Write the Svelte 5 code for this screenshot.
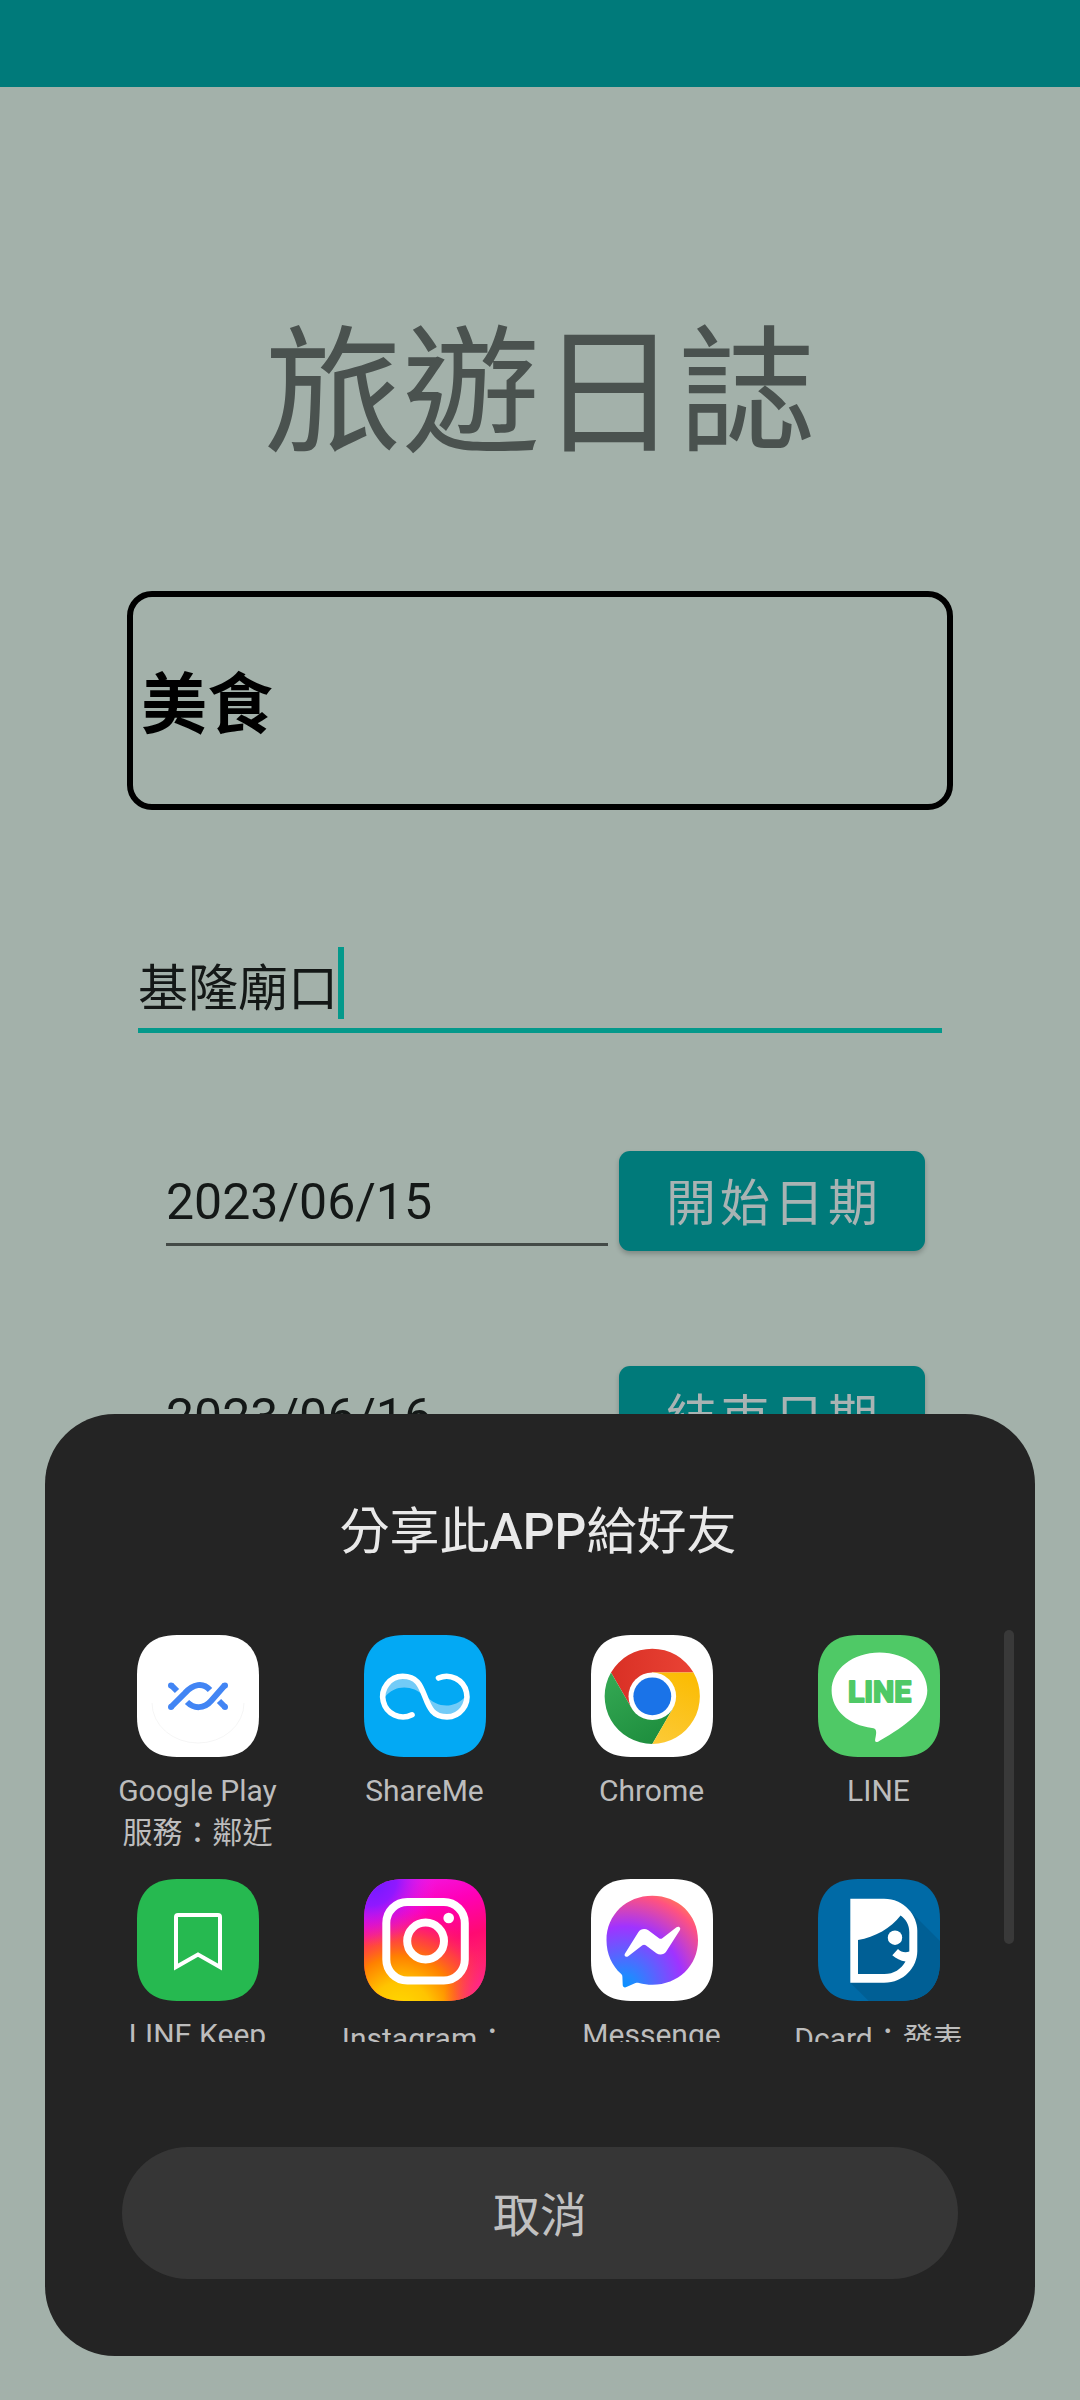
<script>
  let category = $state('美食');
  let place = $state('基隆廟口');
  let dates = $state([
    { id: 'start', value: '2023/06/15', label: '開始日期' },
    { id: 'end', value: '2023/06/16', label: '結束日期' }
  ]);
  const apps = [
    { icon: 'nearby', lines: ['Google Play', '服務：鄰近'] },
    { icon: 'shareme', lines: ['ShareMe'] },
    { icon: 'chrome', lines: ['Chrome'] },
    { icon: 'line', lines: ['LINE'] },
    { icon: 'keep', lines: ['LINE Keep'] },
    { icon: 'instagram', lines: ['Instagram：'], tall: true },
    { icon: 'messenger', lines: ['Messenge'] },
    { icon: 'dcard', lines: ['Dcard：發表'], tall: true }
  ];
  // Rounded launcher tile shared by every app icon
  const tile = 'M40 0H82C108 0 122 14 122 40V82C122 108 108 122 82 122H40C14 122 0 108 0 82V40C0 14 14 0 40 0Z';
</script>

<div class="screen" lang="zh-Hant">
  <header class="status"></header>

  <main>
    <h1>旅遊日誌</h1>
    <input class="category" aria-label="類別" bind:value={category} />
    <div class="place">
      <input aria-label="地點" bind:value={place} />
      <span class="caret"></span>
    </div>
    {#each dates as date (date.id)}
      <div class="date-row">
        <input aria-label={date.label} bind:value={date.value} />
        <button type="button">{date.label}</button>
      </div>
    {/each}
  </main>

  <section class="sheet" aria-labelledby="share-title">
    <h2 id="share-title">分享此<strong>APP</strong>給好友</h2>
    <div class="apps">
      {#each apps as app (app.icon)}
        <button type="button" class="app">
          <svg viewBox="0 0 122 122" aria-hidden="true">
            {#if app.icon === 'nearby'}
              <path d={tile} fill="#fff" />
              <path d="M15 68a46 40 0 0 0 92 0" fill="none" stroke="#eee" stroke-width="0.6" />
              <g fill="none" stroke="#4285f4" stroke-width="6">
                <path d="M34 72L48 58C56 49 66 47 73 55" />
                <path d="M50 67C57 74 67 74 74 66L88 50" />
                <path d="M34 50l6 6M82 66l6 6" />
              </g>
              <g fill="#4285f4">
                <circle cx="34" cy="50.400" r="3" /><circle cx="34" cy="72" r="3" />
                <circle cx="88" cy="50.400" r="3" /><circle cx="88" cy="72" r="3" />
              </g>
            {:else if app.icon === 'shareme'}
              <path d={tile} fill="#03a9f4" />
              <path d="M20 62C20 48 29 42 39 42C52 42 56 52 60 61C48 49 30 50 21 62Z" fill="#72cbf7" />
              <path d="M62 61C73 73 90 74 101 62C101 76 92 81 83 81C70 81 66 71 62 61Z" fill="#72cbf7" />
              <path d="M48 79.800A20.300 20.300 0 1 1 38.700 41.300C53 41.300 56.500 50 60.900 61.600S69 81.900 83 81.900A20.300 20.300 0 1 0 74.500 43" fill="none" stroke="#fff" stroke-width="5.600" stroke-linecap="round" />
            {:else if app.icon === 'chrome'}
              <defs>
                <linearGradient id="c-red"><stop stop-color="#d93025" /><stop offset="1" stop-color="#ea4335" /></linearGradient>
                <linearGradient id="c-green" x1="0.700" y1="1" x2="0.100" y2="0"><stop stop-color="#1e8e3e" /><stop offset="1" stop-color="#34a853" /></linearGradient>
                <linearGradient id="c-yellow" x1="0.300" y1="1" x2="0.600" y2="0"><stop stop-color="#fcc934" /><stop offset="1" stop-color="#fbbc04" /></linearGradient>
              </defs>
              <path d={tile} fill="#fff" />
              <path d="M20 37.500A47.700 47.700 0 0 1 102.500 37.500H61.300L40.700 73.300Z" fill="url(#c-red)" />
              <path d="M20 37.500A47.700 47.700 0 0 0 61.300 109L82 73.300H40.700Z" fill="url(#c-green)" />
              <path d="M102.500 37.500A47.700 47.700 0 0 1 61.300 109L82 73.300L61.300 37.500Z" fill="url(#c-yellow)" />
              <circle cx="61.300" cy="61.300" r="23.800" fill="#fff" />
              <circle cx="61.300" cy="61.300" r="18.900" fill="#1a73e8" />
            {:else if app.icon === 'line'}
              <path d={tile} fill="#4fc966" />
              <path d="M61.500 17.600C88 17.600 109.300 34 109.300 55.600C109.300 75 88 91 62 105.500C58 108.500 56.500 107 57.300 103.500C59 96 58.500 93.500 54 93C31 90.500 13.600 75 13.600 55.600C13.600 34 35 17.600 61.500 17.600Z" fill="#fff" />
              <text x="61.500" y="67" class="line-word">LINE</text>
            {:else if app.icon === 'keep'}
              <path d={tile} fill="#26b950" />
              <path d="M39 88V38q0-2 2-2H81q2 0 2 2V88L61 75.500Z" fill="none" stroke="#fff" stroke-width="4" />
            {:else if app.icon === 'instagram'}
              <defs>
                <linearGradient id="i-base" x1="0.200" y1="0" x2="0.500" y2="1"><stop stop-color="#f01bea" /><stop offset="0.300" stop-color="#ff00b8" /><stop offset="0.600" stop-color="#ff0a72" /><stop offset="1" stop-color="#ff3a60" /></linearGradient>
                <radialGradient id="i-warm" cx="0.300" cy="1.100" r="0.850"><stop stop-color="#ffdd00" /><stop offset="0.300" stop-color="#ffc400" /><stop offset="0.550" stop-color="#ff8000" /><stop offset="0.750" stop-color="#ff5030" stop-opacity="0.700" /><stop offset="1" stop-color="#ff1080" stop-opacity="0" /></radialGradient>
                <radialGradient id="i-violet" cx="0.050" cy="0" r="0.550"><stop stop-color="#6a1cff" /><stop offset="0.400" stop-color="#9018ff" /><stop offset="1" stop-color="#f01bea" stop-opacity="0" /></radialGradient>
                <radialGradient id="i-pink" cx="1.050" cy="1" r="0.400"><stop stop-color="#ff18c0" /><stop offset="1" stop-color="#ff1090" stop-opacity="0" /></radialGradient>
              </defs>
              <path d={tile} fill="url(#i-base)" />
              <path d={tile} fill="url(#i-warm)" />
              <path d={tile} fill="url(#i-violet)" />
              <path d={tile} fill="url(#i-pink)" />
              <rect x="22.300" y="23" width="78.500" height="78.500" rx="21" fill="none" stroke="#fff" stroke-width="8" />
              <circle cx="61.600" cy="62" r="18.400" fill="none" stroke="#fff" stroke-width="8" />
              <circle cx="84.700" cy="39" r="5.300" fill="#fff" />
            {:else if app.icon === 'messenger'}
              <defs>
                <radialGradient id="m-fill" cx="0.190" cy="0.990" r="1.090"><stop stop-color="#0a91ff" /><stop offset="0.120" stop-color="#2388ff" /><stop offset="0.600" stop-color="#a033ff" /><stop offset="0.920" stop-color="#ff5280" /><stop offset="1" stop-color="#ff7061" /></radialGradient>
              </defs>
              <path d={tile} fill="#fff" />
              <path d="M61.300 16.700C87 16.700 107 35.500 107 61.200S87 105.700 61.300 105.700C56.700 105.700 52.200 105.100 48 103.900C46.500 103.600 45.500 103.700 44.500 104.100L35.400 108.100C33.500 108.900 31.800 108 31.700 106L31.400 97.900C31.400 96.500 30.900 95.600 30 94.800C21 86.700 15.500 75 15.500 61.200C15.500 35.500 35.600 16.700 61.300 16.700Z" fill="url(#m-fill)" />
              <path d="M34 74.500L47.300 53.200C49.500 49.800 54 48.900 57.300 51.300L68 59.300C69 60 70.300 60 71.300 59.300L85.500 48.300C87.800 46.600 90.300 48.800 88.800 51.200L75.400 72.300C73.200 75.700 68.700 76.600 65.400 74.200L54.700 66.200C53.700 65.500 52.400 65.500 51.400 66.200L37.200 77.200C34.900 78.900 32.500 76.900 34 74.500Z" fill="#fff" />
            {:else}
              <clipPath id="d-clip"><path d={tile} /></clipPath>
              <path d={tile} fill="#006aa6" />
              <path d="M32.300 103.700L93 33L140 80V140H69Z" fill="#005f95" clip-path="url(#d-clip)" />
              <path d="M32.300 19.700H66C86 19.700 99.300 36 99.300 52V72C99.300 88 86 103.700 66 103.700H32.300Z" fill="#fff" />
              <path d="M40 61C57 58 73 49 82.600 36.400C88 40 91.300 46 91.300 53V72.600C87 74 83 73 80 70L74.300 76.200C78 79.500 82.500 81.700 87.500 82.400C83 90 76 95 66.300 95H40Z" fill="#005f95" />
              <circle cx="77" cy="58.700" r="7.200" fill="#fff" />
            {/if}
          </svg>
          <span class="label" class:tall={app.tall}>
            {#each app.lines as line}<span>{line}</span>{/each}
          </span>
        </button>
      {/each}
    </div>
    <span class="scrollbar"></span>
    <button type="button" class="cancel">取消</button>
  </section>
</div>

<style>
  :global(body) {
    margin: 0;
    background: #a3b1aa;
  }
  .screen {
    position: relative;
    box-sizing: border-box;
    min-height: 100vh;
    overflow: hidden;
    background: #a3b1aa;
    font-family: Roboto, 'Noto Sans CJK TC', sans-serif;
  }
  input,
  button {
    box-sizing: border-box;
    margin: 0;
    border: 0;
    padding: 0;
    background: none;
    font: inherit;
    outline: none;
  }
  .status {
    height: 87px;
    background: #007a7a;
  }
  main {
    padding: 207px 127px 0;
  }
  h1 {
    margin: 0;
    color: #4a524f;
    font-size: 138px;
    font-weight: 400;
    line-height: 200px;
    text-align: center;
  }
  .category {
    display: block;
    width: 100%;
    height: 219px;
    margin-top: 97px;
    padding: 0 0 4px 8px;
    border: 6px solid #000;
    border-radius: 25px;
    color: #000;
    font-size: 66px;
    font-weight: 700;
  }
  .place {
    display: flex;
    align-items: flex-start;
    box-sizing: border-box;
    height: 86px;
    margin: 137px 11px 0;
    border-bottom: 5px solid #04998b;
  }
  .place input {
    width: 200px;
    height: 74px;
    color: #141817;
    font-size: 50px;
  }
  .caret {
    width: 6px;
    height: 72px;
    background: #04998b;
  }
  .date-row {
    display: flex;
    gap: 11px;
    height: 100px;
    margin: 118px 28px 0 39px;
  }
  .date-row + .date-row {
    margin-top: 115px;
  }
  .date-row input {
    flex: 1;
    min-width: 0;
    height: 95px;
    border-bottom: 3px solid #434a47;
    padding-top: 10px;
    color: #141817;
    font-size: 50px;
  }
  .date-row button {
    width: 306px;
    border-radius: 11px;
    padding: 0 0 4px 4px;
    background: #007a7a;
    box-shadow: 0 3px 5px rgb(0 0 0 / 22%);
    color: #a9b3b3;
    font-size: 50px;
    letter-spacing: 4px;
  }
  .sheet {
    position: absolute;
    right: 45px;
    bottom: 44px;
    left: 45px;
    display: flex;
    flex-direction: column;
    padding: 82px 43px 77px 39px;
    border-radius: 70px;
    background: #242424;
  }
  h2 {
    margin: 0;
    color: #e9e9e9;
    font-size: 50px;
    font-weight: 400;
    line-height: 72px;
    text-align: center;
  }
  h2 strong {
    font-weight: 500;
  }
  .apps {
    display: grid;
    grid-template-columns: repeat(4, 1fr);
    grid-auto-rows: 244px;
    height: 407px;
    margin-top: 67px;
    overflow: hidden;
  }
  .app {
    display: flex;
    flex-direction: column;
    align-items: center;
    justify-content: flex-start;
    color: #bdbdbd;
    font-size: 30px;
  }
  .app svg {
    width: 122px;
    height: 122px;
    flex: none;
  }
  .line-word {
    fill: #4fc966;
    stroke: #4fc966;
    stroke-width: 2;
    stroke-linejoin: round;
    font-size: 30px;
    font-weight: 700;
    text-anchor: middle;
  }
  .label {
    display: flex;
    flex-direction: column;
    margin-top: 13px;
    line-height: 42px;
    white-space: nowrap;
  }
  .tall {
    line-height: 50px;
  }
  .scrollbar {
    position: absolute;
    top: 216px;
    right: 21px;
    width: 10px;
    height: 314px;
    border-radius: 5px;
    background: #393939;
  }
  .cancel {
    height: 132px;
    margin: 105px 34px 0 38px;
    border-radius: 66px;
    padding-bottom: 3px;
    background: #363636;
    color: #c1c1c1;
    font-size: 47px;
  }
</style>
